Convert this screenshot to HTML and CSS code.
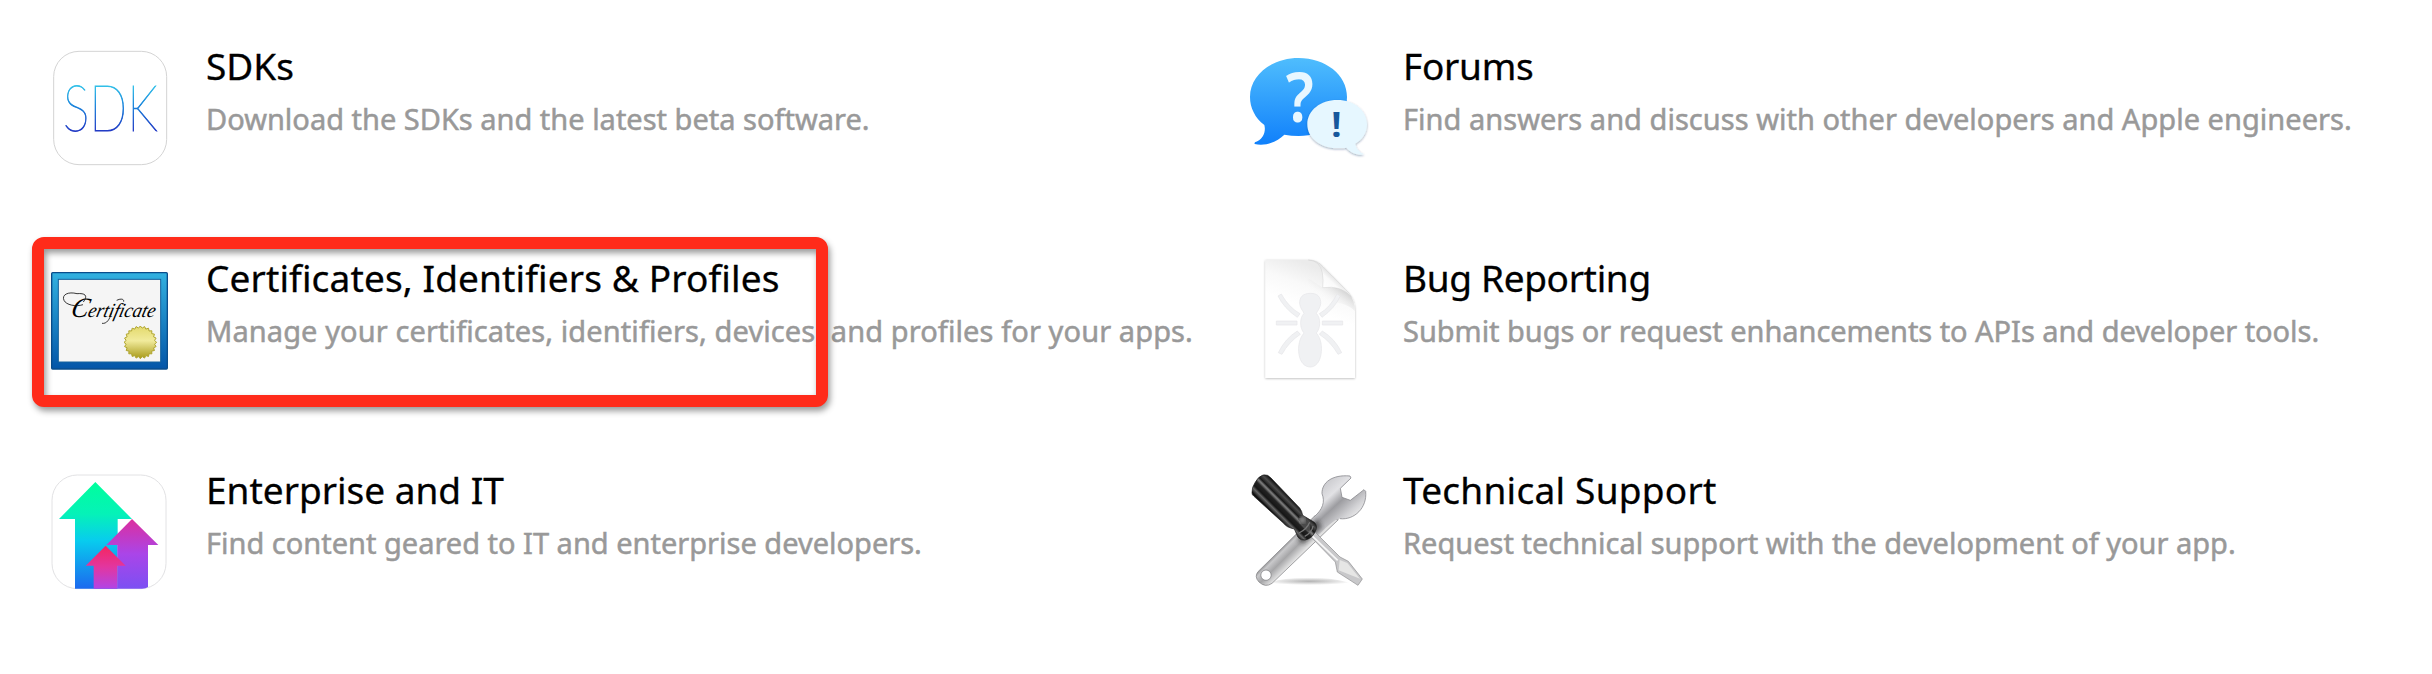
FILE: index.html
```html
<!DOCTYPE html>
<html lang="en">
<head>
<meta charset="utf-8">
<title>Developer resources</title>
<link rel="stylesheet" href="styles.css">
</head>
<body>
<main class="resources">
  <article class="resource">
    <svg class="icon" viewBox="60 54 360 360">
      <defs><linearGradient id="sdk" gradientUnits="userSpaceOnUse" x1="0" y1="160" x2="0" y2="306"><stop offset="0" stop-color="#35c8ea"/><stop offset=".45" stop-color="#1b86dc"/><stop offset="1" stop-color="#2338c4"/></linearGradient></defs>
      <rect x="71" y="64" width="339" height="340" rx="76" fill="#fff" stroke="#d4d4d4" stroke-width="3"/>
      <text class="sdk-text" x="99" y="303" font-size="193" textLength="284" lengthAdjust="spacingAndGlyphs" fill="url(#sdk)" stroke="url(#sdk)">SDK</text>
    </svg>
    <div class="copy"><h2 class="title">SDKs</h2><p class="desc">Download the SDKs and the latest beta software.</p></div>
  </article>
  <article class="resource">
    <svg class="icon" viewBox="51 54 360 360">
      <defs>
        <linearGradient id="bub" x1="0" y1="0" x2="0" y2="1"><stop offset="0" stop-color="#4fbdfd"/><stop offset="1" stop-color="#1080fb"/></linearGradient>
        <filter id="soft" x="-20%" y="-20%" width="140%" height="140%"><feDropShadow dx="0" dy="3" stdDeviation="3" flood-color="#003060" flood-opacity=".4"/></filter>
      </defs>
      <path d="M206 84C286 84 351 134 351 201C351 268 286 318 206 318Q184 318 163 314C143 334 106 351 74 342C72 338 76 336 82 334C101 325 108 303 103 285C75 264 60 233 60 201C60 134 126 84 206 84Z" fill="url(#bub)"/>
      <text class="mark" x="167" y="275" font-size="208" textLength="84" lengthAdjust="spacingAndGlyphs" fill="#e8f7ff">?</text>
      <path d="M322 210C372 210 411 241 411 283C411 309 397 330 376 341C379 357 389 367 403 373C384 377 363 370 349 353C340 355 331 355 322 355C272 355 232 325 232 283C232 241 272 210 322 210Z" fill="#e6f7ff" filter="url(#soft)"/>
      <text class="mark" x="302" y="322" font-size="102" textLength="34" lengthAdjust="spacingAndGlyphs" fill="#17589c">!</text>
    </svg>
    <div class="copy"><h2 class="title t-forums">Forums</h2><p class="desc d-forums">Find answers and discuss with other developers and Apple engineers.</p></div>
  </article>
  <article class="resource selected">
    <svg class="icon" viewBox="90 105 360 360">
      <defs>
        <linearGradient id="frame" x1="0" y1="0" x2="0" y2="1"><stop offset="0" stop-color="#32b1e0"/><stop offset="1" stop-color="#0355a8"/></linearGradient>
        <linearGradient id="gold" x1="0" y1="0" x2="0" y2="1"><stop offset="0" stop-color="#e3d96c"/><stop offset=".45" stop-color="#f1eb9c"/><stop offset="1" stop-color="#a89a18"/></linearGradient>
      </defs>
      <rect x="95" y="143" width="347" height="289" rx="3" fill="url(#frame)" stroke="#0a4d8c" stroke-width="4"/>
      <rect x="115" y="163" width="307" height="248" fill="#f5f5f5" stroke="#15619c" stroke-width="3"/>
      <text class="script" transform="translate(149 275) skewX(-14)" font-size="60" textLength="254" lengthAdjust="spacingAndGlyphs"><tspan font-size="84">C</tspan>ertificate</text>
      <path d="M190 231C205 211 195 204 171 206C145 199 124 209 132 226C138 240 168 246 189 239M275 262C269 284 260 297 246 295M290 226C304 219 313 223 311 230" fill="none" stroke="#111" stroke-width="2.5"/>
      <path id="seal" fill="url(#gold)" stroke="#b0a52e" stroke-width="3"/>
    </svg>
    <div class="copy"><h2 class="title t-cert">Certificates, Identifiers &amp; Profiles</h2><p class="desc d-cert">Manage your certificates, identifiers, devices, and profiles for your apps.</p></div>
  </article>
  <article class="resource">
    <svg class="icon" viewBox="21 45 360 360">
      <defs>
        <linearGradient id="page" x1=".35" y1="0" x2=".25" y2=".35"><stop offset="0" stop-color="#ebebeb"/><stop offset=".5" stop-color="#f9f9f9"/><stop offset="1" stop-color="#fff"/></linearGradient>
        <linearGradient id="shade" gradientUnits="userSpaceOnUse" x1="310" y1="122" x2="266" y2="180"><stop offset="0" stop-color="#c9c9c9"/><stop offset="1" stop-color="#fff" stop-opacity="0"/></linearGradient>
        <linearGradient id="curl" gradientUnits="userSpaceOnUse" x1="248" y1="128" x2="282" y2="90"><stop offset="0" stop-color="#fff"/><stop offset=".6" stop-color="#fafafa"/><stop offset="1" stop-color="#dedede"/></linearGradient>
        <filter id="pshadow"><feDropShadow dx="0" dy="2" stdDeviation="2.5" flood-color="#000" flood-opacity=".28"/></filter>
      </defs>
      <path d="M76 45H205Q232 45 250 66L326 144Q345 166 345 195V399H76Z" fill="url(#page)" filter="url(#pshadow)"/>
      <path d="M205 100L248 128Q300 122 326 144Q345 166 345 199Q315 162 205 170Z" fill="url(#shade)"/>
      <path d="M205 45Q240 47 247 83Q251 105 248 128Q305 120 334 156Q329 144 316 133L250 66Q232 45 205 45Z" fill="url(#curl)" stroke="#d2d2d2" stroke-width="1.5"/>
      <g fill="#f0f1f3" stroke="#e6e6e8" stroke-width="2">
        <path d="M211 145C235 145 243 158 242 176C241 188 233 197 229 205C243 219 242 250 229 264C243 280 247 305 243 329C239 352 226 366 211 366C194 366 181 352 177 329C173 305 178 280 192 264C179 250 178 219 192 205C188 197 180 188 179 176C178 158 187 145 211 145Z"/>
        <path d="M114 153L124 147Q146 187 180 206L172 217Q132 190 114 153ZM109 228H171V240H109ZM172 258L181 268Q146 291 126 328L115 323Q135 281 172 258ZM301 153L291 147Q271 187 238 206L246 217Q284 190 301 153ZM247 228H308V240H247ZM247 258L238 268Q273 291 294 328L305 323Q285 281 247 258Z"/>
      </g>
    </svg>
    <div class="copy"><h2 class="title t-bug">Bug Reporting</h2><p class="desc d-bug">Submit bugs or request enhancements to APIs and developer tools.</p></div>
  </article>
  <article class="resource">
    <svg class="icon" viewBox="60 36 360 360">
      <defs>
        <linearGradient id="green" x1="0" y1="0" x2="0" y2="1"><stop offset="0" stop-color="#00ff9c"/><stop offset=".3" stop-color="#05f2b8"/><stop offset=".55" stop-color="#08ccee"/><stop offset="1" stop-color="#1c69ef"/></linearGradient>
        <linearGradient id="violet" x1="0" y1="0" x2="0" y2="1"><stop offset="0" stop-color="#dc2f9e"/><stop offset=".5" stop-color="#aa45e8"/><stop offset="1" stop-color="#7c50f3"/></linearGradient>
        <linearGradient id="pink" x1="0" y1="0" x2="0" y2="1"><stop offset="0" stop-color="#f5265f"/><stop offset=".5" stop-color="#e236a0"/><stop offset="1" stop-color="#b144e6"/></linearGradient>
      </defs>
      <rect x="66" y="45" width="342" height="341" rx="76" fill="#fff" stroke="#e2e2e4" stroke-width="3"/>
      <path d="M196 66L306 177H263V386H135V177H87Z" fill="url(#green)"/>
      <path d="M306 177L385 255H354V381Q348 386 336 386H262V255H229Z" fill="url(#violet)"/>
      <path d="M227 257L287 317H262V386H191V317H167Z" fill="url(#pink)"/>
    </svg>
    <div class="copy"><h2 class="title">Enterprise and IT</h2><p class="desc">Find content geared to IT and enterprise developers.</p></div>
  </article>
  <article class="resource">
    <svg class="icon" viewBox="51 36 360 360">
      <defs>
        <linearGradient id="steel" gradientUnits="userSpaceOnUse" x1="165" y1="250" x2="205" y2="290"><stop offset="0" stop-color="#858587"/><stop offset=".2" stop-color="#c9c9cb"/><stop offset=".55" stop-color="#a6a6a8"/><stop offset="1" stop-color="#e2e2e2"/></linearGradient>
        <linearGradient id="head" gradientUnits="userSpaceOnUse" x1="280" y1="60" x2="390" y2="180"><stop offset="0" stop-color="#c6c6ca"/><stop offset=".3" stop-color="#e2e2e5"/><stop offset=".5" stop-color="#9c9ca0"/><stop offset=".75" stop-color="#d0d0d3"/><stop offset="1" stop-color="#fafafa"/></linearGradient>
        <linearGradient id="handle" gradientUnits="userSpaceOnUse" x1="80" y1="110" x2="128" y2="62"><stop offset="0" stop-color="#111"/><stop offset=".16" stop-color="#666"/><stop offset=".27" stop-color="#161616"/><stop offset=".46" stop-color="#222"/><stop offset=".58" stop-color="#838383"/><stop offset=".68" stop-color="#171717"/><stop offset=".85" stop-color="#4c4c4c"/><stop offset="1" stop-color="#151515"/></linearGradient>
        <radialGradient id="floor"><stop offset="0" stop-color="#888" stop-opacity=".65"/><stop offset="1" stop-color="#888" stop-opacity="0"/></radialGradient>
        <filter id="blur"><feGaussianBlur stdDeviation="6"/></filter>
      </defs>
      <path d="M105 375C150 345 320 345 370 375Z" fill="url(#floor)"/>
      <path d="M84 335L254 168L325 179L126 370Q106 384 87 366Q72 350 84 335ZM108 330A15 15 0 1 0 108 361A15 15 0 1 0 108 330Z" fill="url(#steel)" fill-rule="evenodd" stroke="#77777a" stroke-width="2"/>
      <path d="M253 170C278 148 286 126 276 101C275 68 306 43 360 48L363 54L331 85L336 112L361 121L402 89L407 94C412 143 373 181 330 176C314 176 285 205 264 225L235 190Z" fill="url(#head)"/>
      <path d="M253 170C278 148 286 126 276 101C275 68 306 43 360 48L363 54L331 85L336 112L361 121L402 89L407 94C412 143 373 181 330 176" fill="none" stroke="#8d8d91" stroke-width="2.5"/>
      <path d="M202 238L262 178L276 202L220 252Z" fill="#222" opacity=".55" filter="url(#blur)"/>
      <path d="M240 228L255 216L330 291L355 304L397 357L384 376L322 336L316 306Z" fill="#c8c8ca" stroke="#8c8c8e" stroke-width="2"/>
      <path d="M248 229L323 301" stroke="#f7f7f7" stroke-width="5"/>
      <path d="M329 300L352 309L390 356L326 331Z" fill="#e6e6e5"/>
      <path d="M66 99Q65 82 75 68Q84 50 99 45Q113 42 123 54L209 144Q216 153 218 166L248 184Q263 192 258 209Q249 235 225 240Q212 242 204 232L193 207Q169 202 161 190L72 109Q66 105 66 99Z" fill="url(#handle)" stroke="#171717" stroke-width="2"/>
      <path d="M205 178Q218 163 231 182Q247 198 238 215Q220 206 205 178Z" fill="#494949"/>
      <circle cx="217" cy="180" r="8" fill="#aaa" filter="url(#blur)"/>
      <path d="M207 219Q231 208 239 187M224 229Q246 218 249 198" fill="none" stroke="#777" stroke-width="4"/>
    </svg>
    <div class="copy"><h2 class="title t-tech">Technical Support</h2><p class="desc">Request technical support with the development of your app.</p></div>
  </article>
</main>
<script src="seal.js"></script>
</body>
</html>
```
FILE: styles.css
```css
body { margin: 0; background: #fff; font-family: "Noto Sans", sans-serif; }
.resources {
  display: grid;
  grid-template-columns: 1197px 1fr;
  grid-auto-rows: 212px;
  height: 674px;
  box-sizing: border-box;
  padding: 48px 0 0 50px;
  overflow: hidden;
}
.resource { position: relative; display: flex; align-items: flex-start; min-width: 0; }
.icon { flex: none; width: 120px; height: 120px; margin-right: 36px; overflow: visible; }
.copy { display: flex; flex-direction: column; white-space: nowrap; }
.title { margin: -9px 0 0; font-size: 37px; line-height: 54px; font-weight: 400; color: #000; -webkit-text-stroke: .3px #000; }
.desc { margin: 4px 0 0; font-size: 29px; line-height: 44px; color: #999; -webkit-text-stroke: .5px #999; }
.t-forums { letter-spacing: -.25px; }
.t-cert { letter-spacing: .13px; }
.t-bug { letter-spacing: -.33px; }
.t-tech { letter-spacing: .25px; }
.d-forums { letter-spacing: .03px; }
.d-cert { letter-spacing: .1px; }
.d-bug { letter-spacing: -.04px; }
/* Red callout drawn over the row it highlights */
.selected::after {
  content: "";
  position: absolute;
  left: -18px;
  top: -23px;
  width: 796px;
  height: 170px;
  box-sizing: border-box;
  border: 12px solid #ff2b1a;
  border-radius: 12px;
  filter: drop-shadow(2px 4px 3px rgba(0, 0, 0, .4));
}
.sdk-text { font-family: Lato, sans-serif; font-weight: 100; stroke-width: 2.6; }
.mark { font-family: "Noto Sans", sans-serif; font-weight: 600; }
.script { font-family: "Liberation Serif", serif; font-style: italic; }
```
FILE: seal.js
```js
// Serrated edge of the gold certificate seal
const points = [];
for (let i = 0; i < 48; i++) {
  const a = i * Math.PI / 24;
  const r = i % 2 ? 43 : 49;
  points.push((361 + r * Math.cos(a)).toFixed(1) + " " + (352 + r * Math.sin(a)).toFixed(1));
}
document.getElementById("seal").setAttribute("d", "M" + points.join("L") + "Z");
```
